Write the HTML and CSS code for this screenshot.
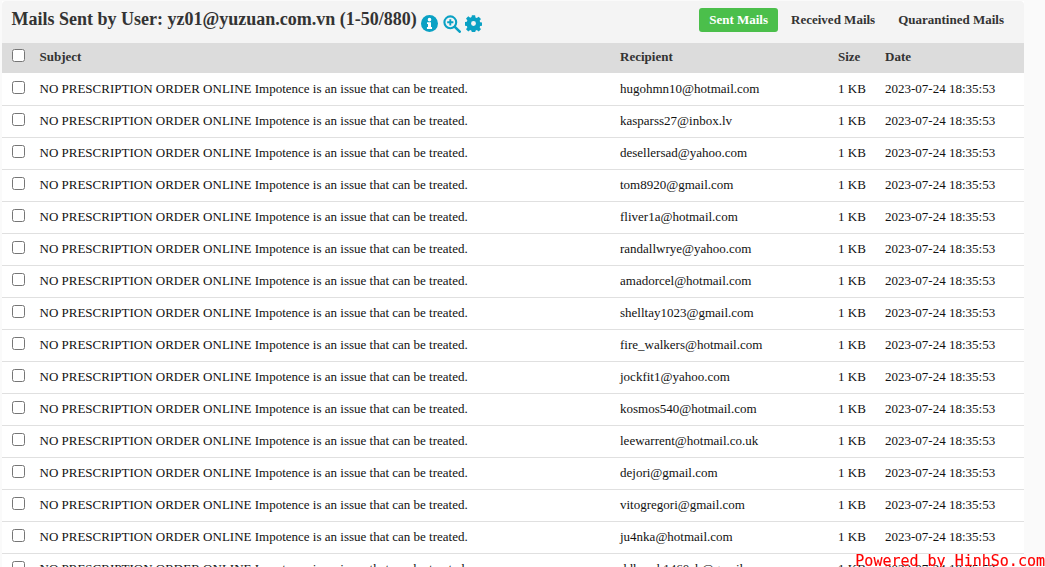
FILE: index.html
```html
<!DOCTYPE html>
<html lang="en">
<head>
<meta charset="utf-8">
<title>Mails Sent by User</title>
<link rel="stylesheet" href="styles.css">
</head>
<body>
<main class="panel">
  <header class="panel-head">
    <h1 class="title">Mails Sent by User: yz01@yuzuan.com.vn (1-50/880)</h1>
    <div class="title-icons">
      <svg class="icon" viewBox="0 0 18 18" width="17" height="17"><circle cx="9" cy="9" r="9" fill="#0aa1c4"/><circle cx="9" cy="4.9" r="1.9" fill="#fff"/><path d="M6.4 7.6h4.2v5.2h1.1v2H6.3v-2h1.1V9.6h-1z" fill="#fff"/></svg>
      <svg class="icon" viewBox="0 0 18 18" width="18" height="18"><circle cx="7.3" cy="7.3" r="5.9" fill="none" stroke="#0aa1c4" stroke-width="2.1"/><path d="M11.8 11.8l4.9 4.9" stroke="#0aa1c4" stroke-width="2.6" stroke-linecap="round"/><path d="M7.3 4.2v6.2M4.2 7.3h6.2" stroke="#0aa1c4" stroke-width="1.9"/></svg>
      <svg class="icon" viewBox="0 0 18 18" width="17" height="17"><path fill-rule="evenodd" fill="#0aa1c4" d="M7.3.2h3.4l.4 2.4 1.4.6 2-1.4 2.4 2.4-1.4 2 .6 1.4 2.4.4v3.2l-2.4.4-.6 1.4 1.4 2-2.4 2.4-2-1.4-1.4.6-.4 2.4H7.3l-.4-2.4-1.4-.6-2 1.4-2.4-2.4 1.4-2-.6-1.4-2.4-.4V7.6l2.4-.4.6-1.4-1.4-2 2.4-2.4 2 1.4 1.4-.6zM9 6.4a2.6 2.6 0 1 0 0 5.2 2.6 2.6 0 0 0 0-5.2z"/></svg>
    </div>
    <nav class="tabs">
      <a class="tab tab-active">Sent Mails</a>
      <a class="tab">Received Mails</a>
      <a class="tab">Quarantined Mails</a>
    </nav>
  </header>
  <table class="mails">
    <thead>
      <tr><th class="c-check"><input type="checkbox"></th><th class="c-subject">Subject</th><th class="c-recipient">Recipient</th><th class="c-size">Size</th><th class="c-date">Date</th></tr>
    </thead>
    <tbody>
      <tr><td class="c-check"><input type="checkbox"></td><td>NO PRESCRIPTION ORDER ONLINE Impotence is an issue that can be treated.</td><td>hugohmn10@hotmail.com</td><td>1 KB</td><td>2023-07-24 18:35:53</td></tr>
      <tr><td class="c-check"><input type="checkbox"></td><td>NO PRESCRIPTION ORDER ONLINE Impotence is an issue that can be treated.</td><td>kasparss27@inbox.lv</td><td>1 KB</td><td>2023-07-24 18:35:53</td></tr>
      <tr><td class="c-check"><input type="checkbox"></td><td>NO PRESCRIPTION ORDER ONLINE Impotence is an issue that can be treated.</td><td>desellersad@yahoo.com</td><td>1 KB</td><td>2023-07-24 18:35:53</td></tr>
      <tr><td class="c-check"><input type="checkbox"></td><td>NO PRESCRIPTION ORDER ONLINE Impotence is an issue that can be treated.</td><td>tom8920@gmail.com</td><td>1 KB</td><td>2023-07-24 18:35:53</td></tr>
      <tr><td class="c-check"><input type="checkbox"></td><td>NO PRESCRIPTION ORDER ONLINE Impotence is an issue that can be treated.</td><td>fliver1a@hotmail.com</td><td>1 KB</td><td>2023-07-24 18:35:53</td></tr>
      <tr><td class="c-check"><input type="checkbox"></td><td>NO PRESCRIPTION ORDER ONLINE Impotence is an issue that can be treated.</td><td>randallwrye@yahoo.com</td><td>1 KB</td><td>2023-07-24 18:35:53</td></tr>
      <tr><td class="c-check"><input type="checkbox"></td><td>NO PRESCRIPTION ORDER ONLINE Impotence is an issue that can be treated.</td><td>amadorcel@hotmail.com</td><td>1 KB</td><td>2023-07-24 18:35:53</td></tr>
      <tr><td class="c-check"><input type="checkbox"></td><td>NO PRESCRIPTION ORDER ONLINE Impotence is an issue that can be treated.</td><td>shelltay1023@gmail.com</td><td>1 KB</td><td>2023-07-24 18:35:53</td></tr>
      <tr><td class="c-check"><input type="checkbox"></td><td>NO PRESCRIPTION ORDER ONLINE Impotence is an issue that can be treated.</td><td>fire_walkers@hotmail.com</td><td>1 KB</td><td>2023-07-24 18:35:53</td></tr>
      <tr><td class="c-check"><input type="checkbox"></td><td>NO PRESCRIPTION ORDER ONLINE Impotence is an issue that can be treated.</td><td>jockfit1@yahoo.com</td><td>1 KB</td><td>2023-07-24 18:35:53</td></tr>
      <tr><td class="c-check"><input type="checkbox"></td><td>NO PRESCRIPTION ORDER ONLINE Impotence is an issue that can be treated.</td><td>kosmos540@hotmail.com</td><td>1 KB</td><td>2023-07-24 18:35:53</td></tr>
      <tr><td class="c-check"><input type="checkbox"></td><td>NO PRESCRIPTION ORDER ONLINE Impotence is an issue that can be treated.</td><td>leewarrent@hotmail.co.uk</td><td>1 KB</td><td>2023-07-24 18:35:53</td></tr>
      <tr><td class="c-check"><input type="checkbox"></td><td>NO PRESCRIPTION ORDER ONLINE Impotence is an issue that can be treated.</td><td>dejori@gmail.com</td><td>1 KB</td><td>2023-07-24 18:35:53</td></tr>
      <tr><td class="c-check"><input type="checkbox"></td><td>NO PRESCRIPTION ORDER ONLINE Impotence is an issue that can be treated.</td><td>vitogregori@gmail.com</td><td>1 KB</td><td>2023-07-24 18:35:53</td></tr>
      <tr><td class="c-check"><input type="checkbox"></td><td>NO PRESCRIPTION ORDER ONLINE Impotence is an issue that can be treated.</td><td>ju4nka@hotmail.com</td><td>1 KB</td><td>2023-07-24 18:35:53</td></tr>
      <tr><td class="c-check"><input type="checkbox"></td><td>NO PRESCRIPTION ORDER ONLINE Impotence is an issue that can be treated.</td><td>ddkapsh1460ch@gmail.com</td><td>1 KB</td><td>2023-07-24 18:35:53</td></tr>
    </tbody>
  </table>
</main>
<div class="watermark">Powered by HinhSo.com</div>
</body>
</html>
```
FILE: styles.css
```css
html, body {
  height: 100%;
  overflow: hidden;
}
body {
  margin: 0;
  padding: 1px 21px 0 2px;
  box-sizing: border-box;
  background: #fafafa;
  font-family: "Liberation Serif", "Times New Roman", serif;
  font-size: 13px;
  color: #111;
}
.panel {
  background: #fff;
}
.panel-head {
  display: flex;
  align-items: center;
  height: 42px;
  padding: 0 10px 0 9.5px;
  background: #f4f4f4;
  border-radius: 4px 4px 0 0;
}
.title {
  margin: 0;
  font-size: 18px;
  font-weight: bold;
  color: #333;
  line-height: 1;
  position: relative;
  top: -3px;
}
.title-icons {
  display: flex;
  align-items: center;
  gap: 4.5px;
  margin: 3px 0 0 4.5px;
}
.icon {
  display: block;
}
.tabs {
  display: flex;
  margin-left: auto;
  gap: 3px;
  position: relative;
  top: -2px;
}
.tab {
  padding: 0 10px;
  line-height: 24px;
  font-weight: bold;
  font-size: 13px;
  color: #333;
  border-radius: 3px;
}
.tab-active {
  background: #4bbf4b;
  color: #fff;
}
.mails {
  width: 100%;
  border-collapse: separate;
  border-spacing: 0;
  table-layout: fixed;
}
.mails th {
  height: 28px;
  padding: 0 0 2px;
  text-align: left;
  background: #dcdcdc;
  color: #333;
  font-weight: bold;
  border-bottom: 1px solid #fff;
}
.mails td {
  height: 29px;
  padding: 0 0 2px;
  border-bottom: 1px solid #e0e0e0;
}
.c-check { width: 37.5px; }
.c-check input { margin: 0 0 3px 10px; display: block; }
.c-subject { width: 580.5px; }
.c-recipient { width: 218px; }
.c-size { width: 47px; }
.watermark {
  position: fixed;
  right: 0;
  bottom: -1px;
  font-family: "DejaVu Sans Mono", monospace;
  font-size: 15px;
  line-height: 14px;
  color: #f00;
  -webkit-text-stroke: 0.15px #f00;
}
```
